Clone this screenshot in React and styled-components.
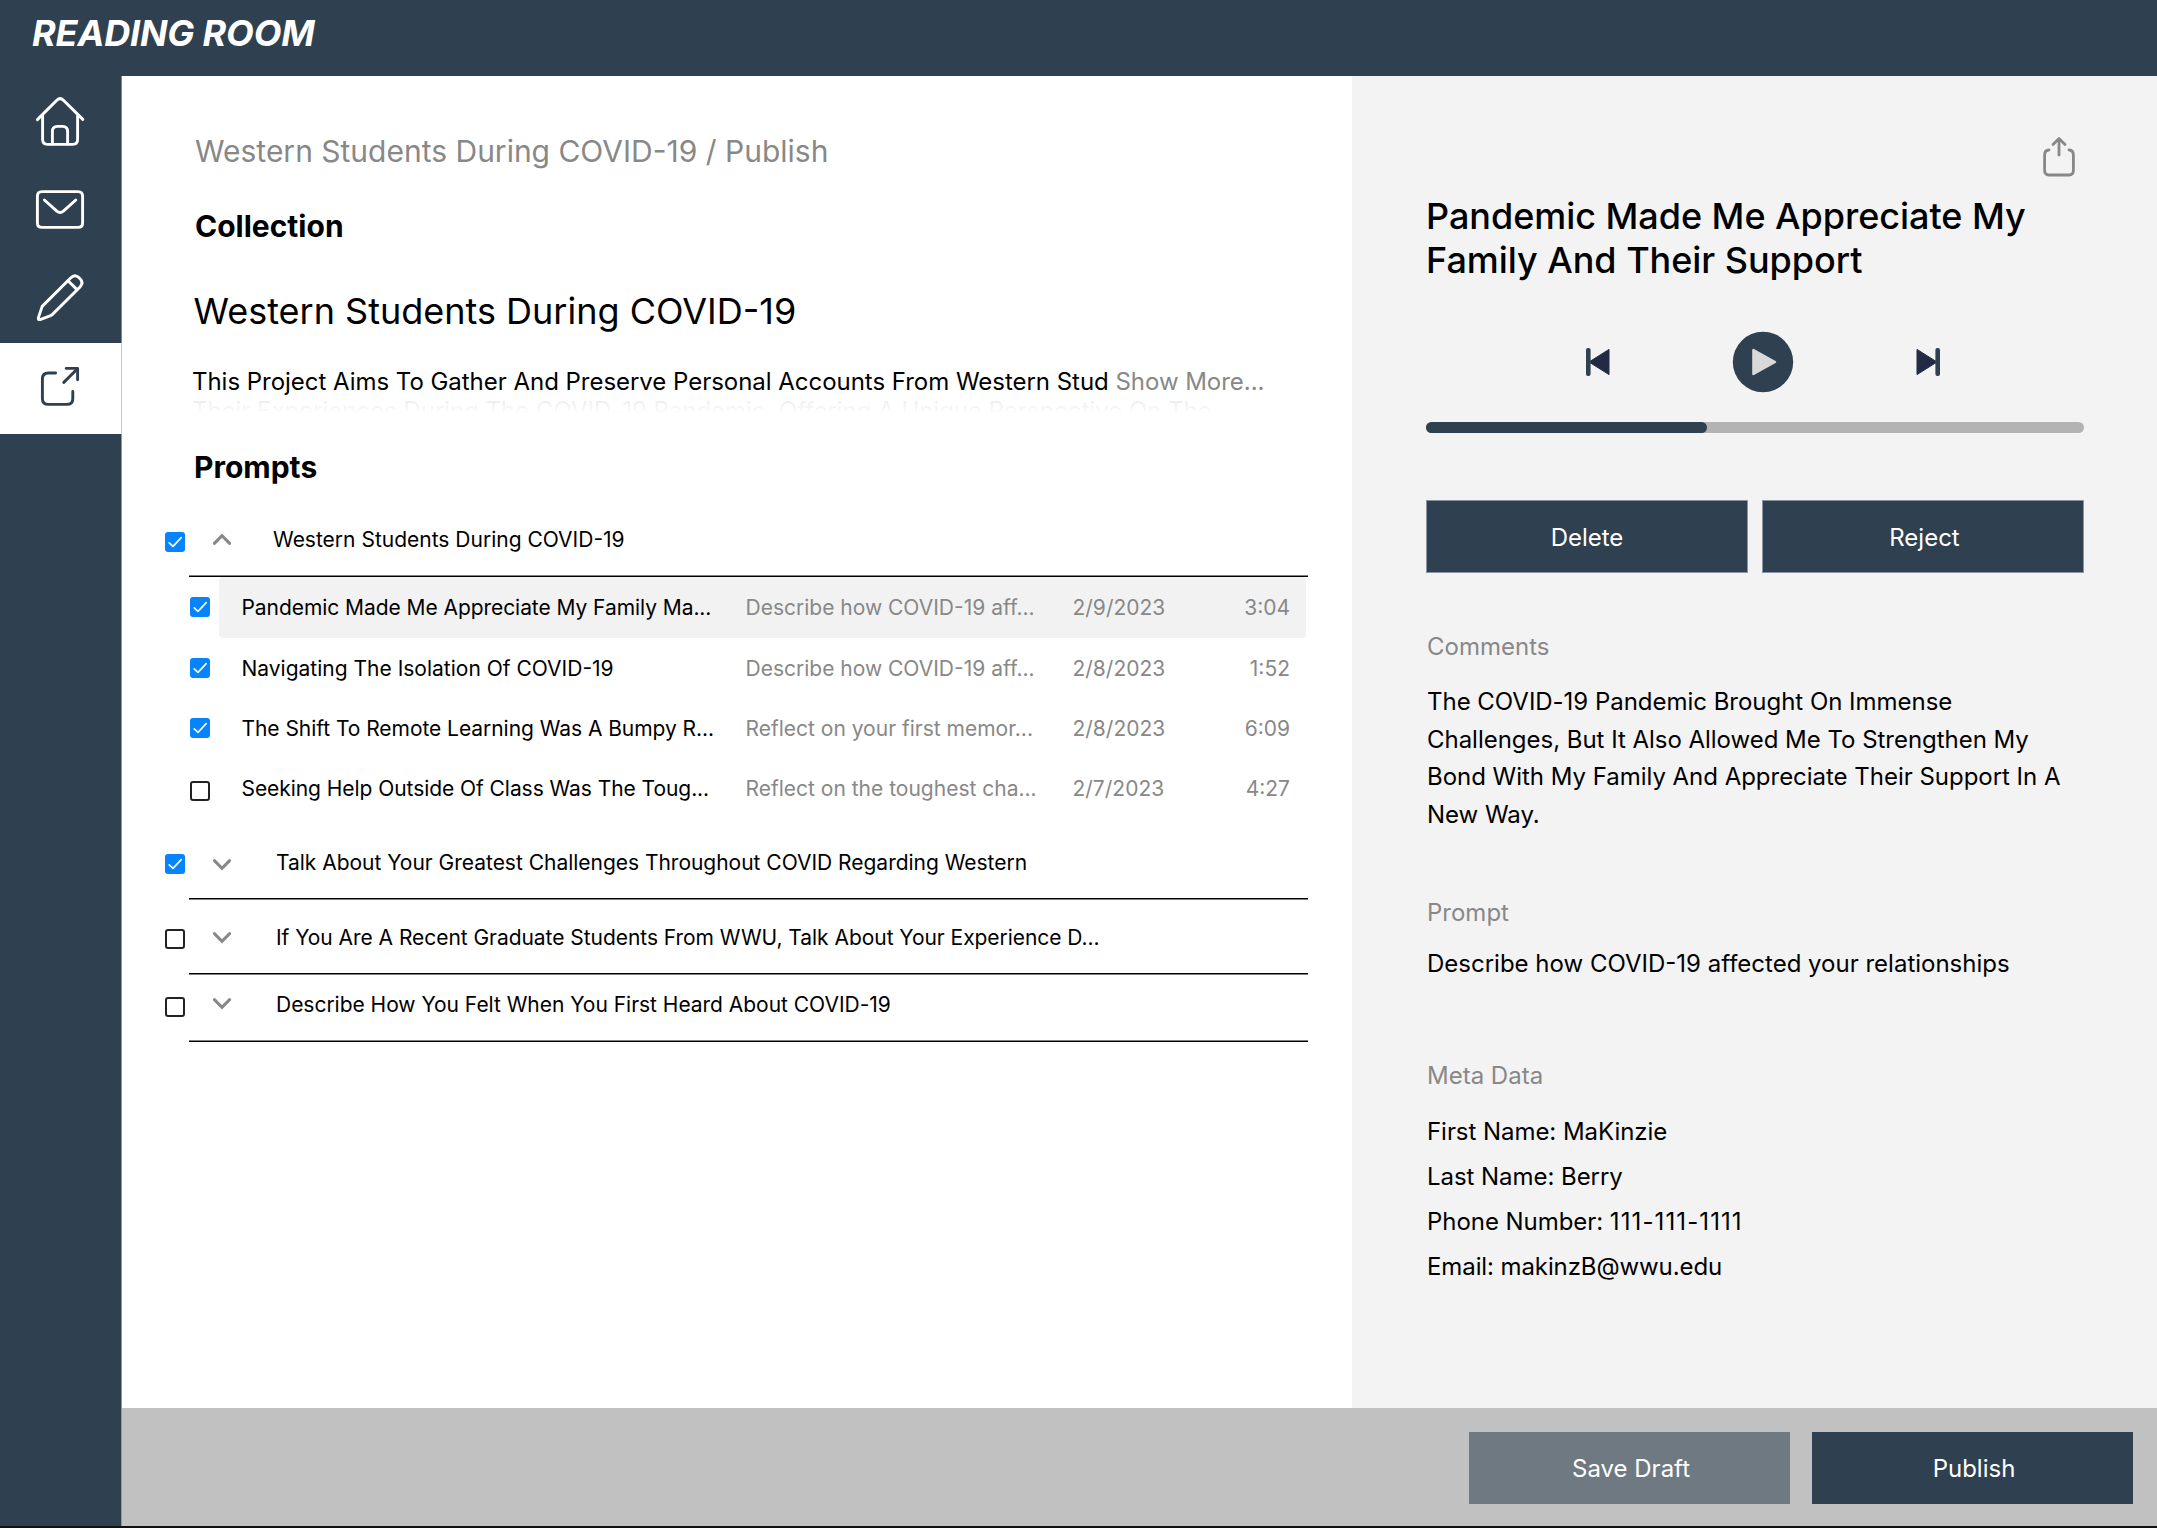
import React from "react";
import styled, { createGlobalStyle, css } from "styled-components";

const navy = "#2f4050";
const grey = "#888888";

const GlobalStyle = createGlobalStyle`
  * { box-sizing: border-box; }
  body { margin: 0; background: #fff; font-family: Inter, "Liberation Sans", sans-serif; color: #000; }
  h1, h2, h3, p, ul { margin: 0; padding: 0; font-weight: 400; }
  button { font: inherit; padding: 0; border: 0; background: none; cursor: pointer; }
`;

const Page = styled.div`
  display: flex;
  flex-direction: column;
  width: 2157px;
  height: 1528px;
  overflow: hidden;
  border-bottom: 2px solid #111;
`;

const TopBar = styled.header`
  flex: none;
  height: 76px;
  padding: 11px 0 0 32px;
  background: ${navy};
`;

const Brand = styled.h1`
  font-size: 36px;
  line-height: 44px;
  font-weight: 700;
  font-style: italic;
  color: #fff;
  letter-spacing: -0.13px;
`;

const Body = styled.div`
  display: flex;
  flex: 1;
  min-height: 0;
`;

const Sidebar = styled.nav`
  flex: none;
  width: 122px;
  display: flex;
  flex-direction: column;
  background: ${navy};
`;

const NavItem = styled.button`
  display: block;
  width: 122px;
  height: ${(p) => p.$h}px;
  border-right: 1px solid ${(p) => (p.$active ? "#c9c9c9" : "#7d8893")};
  background: ${(p) => (p.$active ? "#fff" : navy)};
  color: ${(p) => (p.$active ? navy : "#fff")};
  svg { display: block; fill: none; stroke: currentColor; stroke-width: 2.9; stroke-linecap: round; stroke-linejoin: round; }
`;

const NavRest = styled.div`
  flex: 1;
  border-right: 1px solid #8b98a3;
`;

const Workspace = styled.div`
  flex: 1;
  display: flex;
  flex-direction: column;
`;

const Columns = styled.div`
  flex: 1;
  display: flex;
  min-height: 0;
`;

const Main = styled.main`
  width: 1230px;
  padding-top: 57px;
`;

const Breadcrumb = styled.p`
  margin-left: 73px;
  font-size: 30px;
  line-height: 36px;
  color: ${grey};
`;

const SectionTitle = styled.h2`
  margin: ${(p) => p.$top}px 0 0 ${(p) => p.$left}px;
  font-size: 30px;
  line-height: 36px;
  font-weight: 700;
`;

const CollectionName = styled.h3`
  margin: 45px 0 0 71.5px;
  font-size: 36px;
  line-height: 44px;
`;

const Description = styled.p`
  margin: 34px 0 0 70px;
  font-size: 24px;
  line-height: 29px;
  letter-spacing: -0.03px;
  white-space: nowrap;
`;

const ShowMore = styled.span`
  color: ${grey};
`;

const FadedLine = styled.span`
  display: block;
  color: transparent;
  background: linear-gradient(rgba(0, 0, 0, 0.09), rgba(0, 0, 0, 0.03) 45%, transparent 58%);
  background-clip: text;
  -webkit-background-clip: text;
`;

const GroupHeader = styled.div`
  display: flex;
  align-items: flex-end;
  height: ${(p) => p.$h}px;
  padding-left: 43px;
  padding-bottom: 20px;
`;

const Box = styled.span`
  flex: none;
  display: block;
  width: 20px;
  height: 20px;
  border-radius: 3px;
  ${(p) =>
    p.$checked
      ? css`background: #0584fe;`
      : css`border: 2px solid #222; background: #fff;`}
  svg { display: block; fill: none; stroke: #fff; stroke-width: 1.6; stroke-linecap: round; stroke-linejoin: round; }
`;

const HeaderCheck = styled.div`
  margin-bottom: ${(p) => p.$bottom}px;
`;

const Toggle = styled.svg`
  flex: none;
  display: block;
  width: 20px;
  height: 13px;
  margin: 0 0 ${(p) => p.$bottom}px 27px;
  fill: none;
  stroke: ${grey};
  stroke-width: 3;
  stroke-linecap: round;
`;

const GroupTitle = styled.span`
  margin-left: ${(p) => p.$gap}px;
  padding-bottom: 2px;
  font-size: 21px;
  line-height: 26px;
  letter-spacing: ${(p) => p.$spacing || 0}px;
  white-space: nowrap;
`;

const Rule = styled.div`
  height: 2px;
  width: 1119px;
  margin-left: 67px;
  background: ${(p) =>
    p.$soft === "top"
      ? "linear-gradient(#7f7f7f 50%, #000 50%)"
      : "linear-gradient(#000 50%, #7f7f7f 50%)"};
`;

const Row = styled.div`
  display: flex;
  height: ${(p) => (p.$selected ? 61 : 60)}px;
  padding-left: 68px;
  align-items: center;
`;

const RowCheck = styled.div`
  width: 29px;
  margin-top: ${(p) => p.$shift}px;
`;

const RowBody = styled.div`
  display: grid;
  grid-template-columns: 504px 327px 130px 1fr;
  align-items: center;
  width: 1087px;
  height: 100%;
  padding: ${(p) => (p.$selected ? 0 : 2)}px 16px 0 22.5px;
  border-radius: 4px;
  background: ${(p) => (p.$selected ? "#f2f2f2" : "transparent")};
  font-size: 21px;
  line-height: 26px;
  white-space: nowrap;
`;

const StoryName = styled.span`
  letter-spacing: ${(p) => p.$spacing}px;
`;

const Muted = styled.span`
  color: ${grey};
  text-align: ${(p) => (p.$end ? "right" : "left")};
`;

const Detail = styled.aside`
  flex: 1;
  background: #f3f3f3;
  padding: 60px 73px 0 74px;
`;

const ShareRow = styled.div`
  display: flex;
  justify-content: flex-end;
  padding-right: 9px;
  height: 42px;
  svg { display: block; fill: none; stroke: ${grey}; stroke-width: 2.8; stroke-linecap: round; stroke-linejoin: round; }
`;

const StoryTitle = styled.h2`
  margin-top: 17px;
  font-size: 36px;
  line-height: 43.6px;
  font-weight: 500;
  letter-spacing: -0.04px;
`;

const Player = styled.div`
  display: flex;
  justify-content: center;
  align-items: center;
  gap: 122px;
  margin-top: 49px;
  padding-left: 15px;
  height: 62px;
  svg { display: block; }
`;

const Track = styled.div`
  height: 11px;
  margin-top: 29px;
  border-radius: 5.5px;
  background: #b3b3b3;
`;

const Played = styled.div`
  height: 11px;
  border-radius: 5.5px;
  background: ${navy};
`;

const Actions = styled.div`
  display: flex;
  gap: 14px;
  margin-top: 67px;
`;

const Button = styled.button`
  width: ${(p) => p.$w || 322}px;
  height: ${(p) => p.$h || 73}px;
  padding: 1px 0 0 ${(p) => p.$inset || 0}px;
  border: ${(p) => (p.$outlined ? "1px solid #8a94a3" : "0")};
  background: ${(p) => (p.$faded ? "#6f7981" : navy)};
  color: #fff;
  font-size: 24px;
  line-height: 29px;
`;

const Label = styled.h3`
  margin: ${(p) => p.$top}px 0 0 1px;
  font-size: 24px;
  line-height: 29px;
  color: ${grey};
`;

const Text = styled.p`
  margin: ${(p) => p.$top}px 0 0 1px;
  font-size: 24px;
  line-height: ${(p) => p.$lh}px;
  letter-spacing: ${(p) => p.$spacing || 0}px;
`;

const Phone = styled.span`
  letter-spacing: 1.1px;
`;

const Footer = styled.footer`
  flex: none;
  display: flex;
  justify-content: flex-end;
  align-items: flex-start;
  gap: 22px;
  height: 118px;
  padding: 24px 24px 0 0;
  background: #c1c1c1;
`;

const NAV = [
  { id: "home", top: 76, h: 91, d: ["M37.4 119.6 L56.8 100.2 Q60.2 97 63.4 100.2 L82.8 119.4", "M42.6 115.5 V139.6 Q42.6 144.4 47.4 144.4 H72.8 Q77.6 144.4 77.6 139.6 V115.5", "M52.4 144 V131.5 Q52.4 126.4 57.4 126.4 H62.6 Q67.6 126.4 67.6 131.5 V144"] },
  { id: "mail", top: 167, h: 88, d: ["M42 191.6 H78 Q82.6 191.6 82.6 196.2 V223 Q82.6 227.4 78 227.4 H42 Q37.4 227.4 37.4 223 V196.2 Q37.4 191.6 42 191.6 Z", "M44.4 200 L56.8 211.2 Q60.1 213.8 63.4 211.2 L75.8 200"] },
  { id: "edit", top: 255, h: 88, d: ["M38.4 317.6 L42.2 306.4 L70.6 278 Q75 273.6 79.4 278 Q84.2 282.6 80 287 L52.2 314.6 Q51 315.6 49.4 316.2 L40 319.6 Q37.8 320 38.4 317.6 Z", "M68 280.8 L77 289.6"] },
  { id: "publish", top: 343, h: 91, active: true, d: ["M55.6 373 H48.4 Q42.4 373 42.4 379 V398.4 Q42.4 404.4 48.4 404.4 H66.8 Q72.8 404.4 72.8 398.4 V391.4", "M63.8 382.4 L77.2 369", "M66.2 368.4 H77.6 V379.8"] },
];

const STORIES = [
  { title: "Pandemic Made Me Appreciate My Family Ma...", about: "Describe how COVID-19 aff...", date: "2/9/2023", time: "3:04", checked: true, selected: true, shift: -2, spacing: -0.06 },
  { title: "Navigating The Isolation Of COVID-19", about: "Describe how COVID-19 aff...", date: "2/8/2023", time: "1:52", checked: true, shift: 0, spacing: 0 },
  { title: "The Shift To Remote Learning Was A Bumpy R...", about: "Reflect on your first memor...", date: "2/8/2023", time: "6:09", checked: true, shift: 0, spacing: -0.05 },
  { title: "Seeking Help Outside Of Class Was The Toug...", about: "Reflect on the toughest cha...", date: "2/7/2023", time: "4:27", shift: 5, spacing: -0.06 },
];

const GROUPS = [
  { title: "Western Students During COVID-19", h: 90, gap: 41, check: 3, chevron: 9, checked: true, open: true, soft: "top", stories: STORIES },
  { title: "Talk About Your Greatest Challenges Throughout COVID Regarding Western", h: 80, gap: 44, check: 4, chevron: 7, checked: true, soft: "bottom", spacing: -0.02 },
  { title: "If You Are A Recent Graduate Students From WWU, Talk About Your Experience D...", h: 73, gap: 44, check: 4, chevron: 9, soft: "bottom", spacing: -0.045 },
  { title: "Describe How You Felt When You First Heard About COVID-19", h: 65, gap: 44, check: 3, chevron: 10, soft: "top", spacing: -0.025 },
];

function Checkbox({ checked }) {
  return (
    <Box $checked={checked}>
      {checked && (
        <svg width="20" height="20" viewBox="0 0 20 20">
          <path d="M4.2 10.8 L8 14.4 L16.2 5.6" />
        </svg>
      )}
    </Box>
  );
}

function StoryRow({ story }) {
  return (
    <Row $selected={story.selected}>
      <RowCheck $shift={story.shift}>
        <Checkbox checked={story.checked} />
      </RowCheck>
      <RowBody $selected={story.selected}>
        <StoryName $spacing={story.spacing}>{story.title}</StoryName>
        <Muted>{story.about}</Muted>
        <Muted>{story.date}</Muted>
        <Muted $end>{story.time}</Muted>
      </RowBody>
    </Row>
  );
}

function PromptGroup({ group }) {
  return (
    <section>
      <GroupHeader $h={group.h}>
        <HeaderCheck $bottom={group.check}>
          <Checkbox checked={group.checked} />
        </HeaderCheck>
        <Toggle $bottom={group.chevron} viewBox="0 0 20 13">
          <path d={group.open ? "M2.4 10.4 L10 2.6 L17.6 10.4" : "M2.4 2.6 L10 10.4 L17.6 2.6"} />
        </Toggle>
        <GroupTitle $gap={group.gap} $spacing={group.spacing}>{group.title}</GroupTitle>
      </GroupHeader>
      <Rule $soft={group.soft} />
      {group.stories && group.stories.map((s) => <StoryRow key={s.title} story={s} />)}
    </section>
  );
}

export default function App() {
  return (
    <>
      <GlobalStyle />
      <Page>
        <TopBar>
          <Brand>READING ROOM</Brand>
        </TopBar>
        <Body>
          <Sidebar>
            {NAV.map((n) => (
              <NavItem key={n.id} $h={n.h} $active={n.active} aria-label={n.id}>
                <svg width="121" height={n.h} viewBox={`0 ${n.top} 121 ${n.h}`}>
                  {n.d.map((d) => <path key={d} d={d} />)}
                </svg>
              </NavItem>
            ))}
            <NavRest />
          </Sidebar>
          <Workspace>
            <Columns>
              <Main>
                <Breadcrumb>Western Students During COVID-19 / Publish</Breadcrumb>
                <SectionTitle $top={39} $left={73}>Collection</SectionTitle>
                <CollectionName>Western Students During COVID-19</CollectionName>
                <Description>
                  This Project Aims To Gather And Preserve Personal Accounts From Western Stud <ShowMore>Show More...</ShowMore>
                  <FadedLine>Their Experiences During The COVID-19 Pandemic, Offering A Unique Perspective On The</FadedLine>
                </Description>
                <SectionTitle $top={24} $left={72}>Prompts</SectionTitle>
                {GROUPS.map((g) => <PromptGroup key={g.title} group={g} />)}
              </Main>
              <Detail>
                <ShareRow>
                  <svg width="32" height="42" viewBox="0 0 32 42">
                    <path d="M6 14 Q1.6 14.4 1.6 19 V34.6 Q1.6 39 6 39 H26 Q30.4 39 30.4 34.6 V19 Q30.4 14.4 26 14" />
                    <path d="M16 19 V2.6 M10 8.6 L16 2.6 L22 8.6" />
                  </svg>
                </ShareRow>
                <StoryTitle>Pandemic Made Me Appreciate My Family And Their Support</StoryTitle>
                <Player>
                  <svg width="24" height="28" viewBox="0 0 24 28">
                    <path d="M3 14 L23 1.4 V26.6 Z" fill="#222a44" stroke="#222a44" strokeLinejoin="round" />
                    <rect x="0" y="0" width="4.6" height="28" rx="2" fill={navy} />
                  </svg>
                  <svg width="62" height="62" viewBox="0 0 62 62">
                    <circle cx="31" cy="31" r="30.2" fill={navy} />
                    <path d="M21.4 19 V43 L43 31 Z" fill="#d9d9d9" stroke="#d9d9d9" strokeWidth="2.4" strokeLinejoin="round" />
                  </svg>
                  <svg width="24" height="28" viewBox="0 0 24 28">
                    <path d="M21 14 L1 1.4 V26.6 Z" fill="#222a44" stroke="#222a44" strokeLinejoin="round" />
                    <rect x="19.4" y="0" width="4.6" height="28" rx="2" fill={navy} />
                  </svg>
                </Player>
                <Track>
                  <Played style={{ width: `${(281 / 658) * 100}%` }} />
                </Track>
                <Actions>
                  <Button $outlined>Delete</Button>
                  <Button $outlined $inset={3}>Reject</Button>
                </Actions>
                <Label $top={59}>Comments</Label>
                <Text $top={22} $lh={37.6} $spacing={-0.025}>
                  The COVID-19 Pandemic Brought On Immense Challenges, But It Also Allowed Me To Strengthen My Bond With My Family And Appreciate Their Support In A New Way.
                </Text>
                <Label $top={64}>Prompt</Label>
                <Text $top={22} $lh={29}>Describe how COVID-19 affected your relationships</Text>
                <Label $top={83.5}>Meta Data</Label>
                <Text $top={19} $lh={45} $spacing={-0.05}>First Name: MaKinzie</Text>
                <Text $top={0} $lh={45} $spacing={-0.05}>Last Name: Berry</Text>
                <Text $top={0} $lh={45} $spacing={-0.05}>Phone Number: <Phone>111-111-1111</Phone></Text>
                <Text $top={0} $lh={45} $spacing={-0.1}>Email: makinzB@wwu.edu</Text>
              </Detail>
            </Columns>
            <Footer>
              <Button $faded $w={321} $h={72} $inset={3}>Save Draft</Button>
              <Button $w={321} $h={72} $inset={3}>Publish</Button>
            </Footer>
          </Workspace>
        </Body>
      </Page>
    </>
  );
}
